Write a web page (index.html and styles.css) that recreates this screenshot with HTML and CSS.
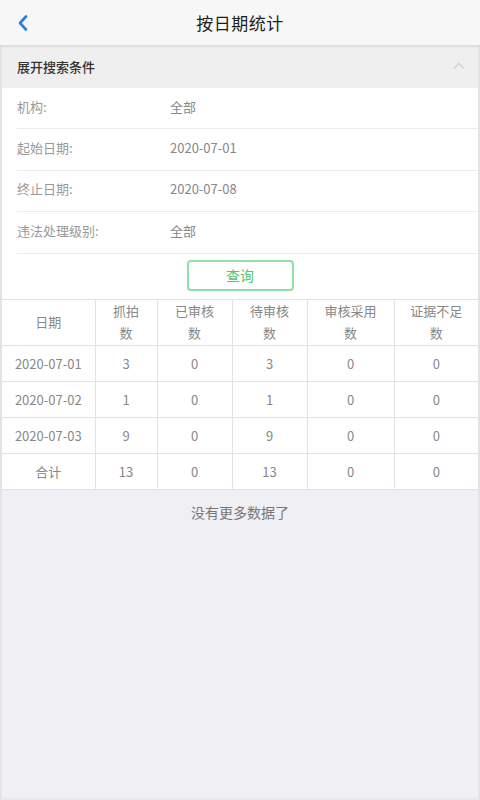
FILE: index.html
```html
<!DOCTYPE html>
<html lang="zh-CN">
<head>
<meta charset="utf-8">
<title>按日期统计</title>
<link rel="stylesheet" href="styles.css">
</head>
<body>
<div class="app">
  <header class="topbar">
    <span class="back">
      <svg width="12" height="16" viewBox="0 0 12 16"><path d="M9 1.5 L3 8 L9 14.5" fill="none" stroke="#2a7fdc" stroke-width="2.6" stroke-linecap="round" stroke-linejoin="round"/></svg>
    </span>
    <h1 class="title">按日期统计</h1>
  </header>
  <main class="main">
    <div class="section-head">
      <span>展开搜索条件</span>
      <svg class="chev" width="12" height="8" viewBox="0 0 12 8"><path d="M1 6.5 L6 1.5 L11 6.5" fill="none" stroke="#cfcfcf" stroke-width="1.3"/></svg>
    </div>
    <div class="form">
      <div class="row"><span class="label">机构:</span><span class="value">全部</span></div>
      <div class="row"><span class="label">起始日期:</span><span class="value">2020-07-01</span></div>
      <div class="row"><span class="label">终止日期:</span><span class="value">2020-07-08</span></div>
      <div class="row"><span class="label">违法处理级别:</span><span class="value">全部</span></div>
      <div class="btn-wrap"><button class="btn">查询</button></div>
    </div>
    <table class="stats">
      <colgroup>
        <col class="c1"><col class="c2"><col class="c3"><col class="c4"><col class="c5"><col class="c6">
      </colgroup>
      <thead>
        <tr><th>日期</th><th>抓拍<br>数</th><th>已审核<br>数</th><th>待审核<br>数</th><th>审核采用<br>数</th><th>证据不足<br>数</th></tr>
      </thead>
      <tbody>
        <tr><td>2020-07-01</td><td>3</td><td>0</td><td>3</td><td>0</td><td>0</td></tr>
        <tr><td>2020-07-02</td><td>1</td><td>0</td><td>1</td><td>0</td><td>0</td></tr>
        <tr><td>2020-07-03</td><td>9</td><td>0</td><td>9</td><td>0</td><td>0</td></tr>
        <tr><td>合计</td><td>13</td><td>0</td><td>13</td><td>0</td><td>0</td></tr>
      </tbody>
    </table>
    <p class="nomore">没有更多数据了</p>
  </main>
</div>
</body>
</html>
```
FILE: styles.css
```css
* { box-sizing: border-box; }
html, body { margin: 0; padding: 0; }
body {
  width: 480px;
  height: 800px;
  overflow: hidden;
  background: #efeff4;
  font-family: "Noto Sans CJK SC", "Noto Sans", sans-serif;
}
.app { height: 800px; display: flex; flex-direction: column; }
.topbar {
  height: 45px;
  background: #f7f7f7;
  display: flex;
  align-items: center;
  justify-content: center;
  position: relative;
  box-shadow: 0 1px 3px rgba(0,0,0,0.12);
  z-index: 2;
}
.back { position: absolute; left: 17px; top: 15px; display: flex; }
.title { margin: 0; font-size: 17px; font-weight: 400; color: #1e1e1e; letter-spacing: 0.5px; }
.main {
  flex: 1;
  border-left: 2px solid #e3e3e8;
  border-right: 2px solid #e3e3e8;
  border-bottom: 2px solid #e8e8ec;
}
.section-head {
  height: 43px;
  background: #efefef;
  display: flex;
  align-items: center;
  justify-content: space-between;
  padding: 0 13px 0 15px;
  font-size: 13px;
  font-weight: 500;
  color: #333;
}
.chev { margin-top: -2px; }
.form { background: #fff; padding-left: 15px; padding-bottom: 8px; }
.row {
  height: 41.4px;
  display: flex;
  align-items: center;
  border-bottom: 1px solid #ececec;
  font-size: 13px;
  padding-bottom: 4px;
}
.label { width: 153px; color: #999; }
.value { color: #888; }
.btn-wrap { display: flex; justify-content: center; padding-top: 6px; padding-right: 15px; }
.btn {
  width: 107px;
  height: 31px;
  border: 2px solid #8ee0a6;
  border-radius: 4px;
  background: #fff;
  color: #4fc670;
  font-family: inherit;
  font-size: 14px;
}
.stats {
  width: 476px;
  border-collapse: collapse;
  table-layout: fixed;
  background: #fff;
  font-size: 13px;
  color: #888;
}
.c1 { width: 93px; } .c2 { width: 62px; } .c3 { width: 75px; }
.c4 { width: 75px; } .c5 { width: 87px; } .c6 { width: 84px; }
.stats th, .stats td {
  border: 1px solid #dfe4ec;
  text-align: center;
  font-weight: normal;
  padding: 0;
}
.stats th { height: 46px; line-height: 22px; padding-bottom: 1px; }
.stats td { height: 36px; }
.stats tr > :first-child { border-left: none; }
.stats tr > :last-child { border-right: none; }
.nomore { margin: 12px 0 0; text-align: center; font-size: 14px; color: #777; }
```
